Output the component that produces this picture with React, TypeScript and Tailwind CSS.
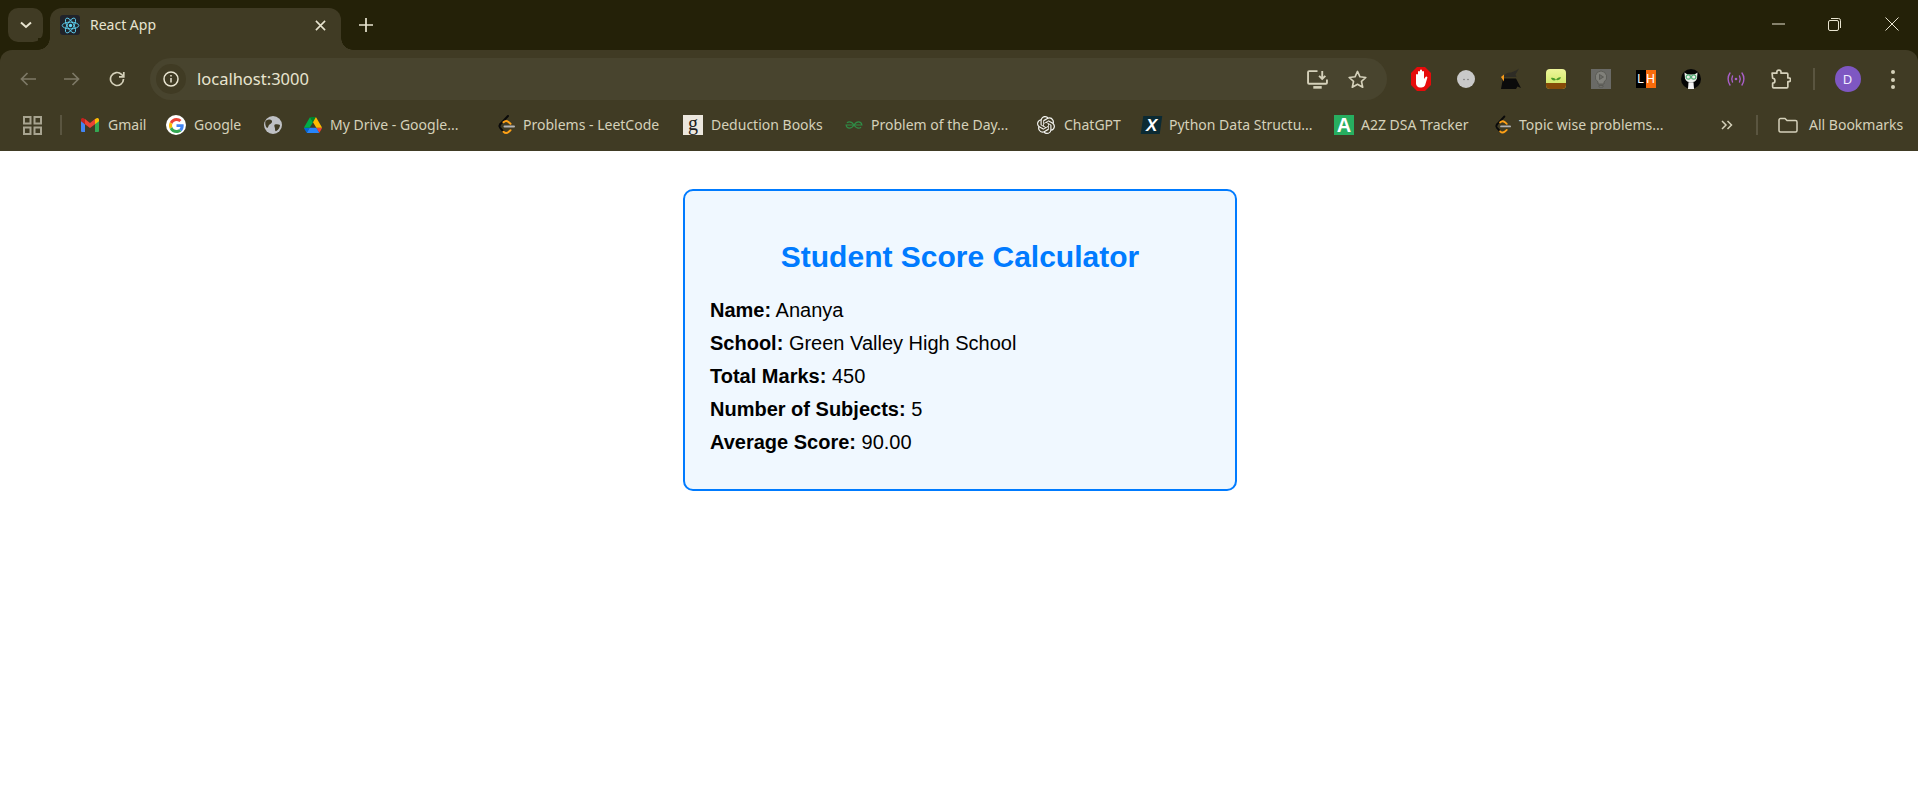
import React from "react";
import { SiOpenai } from "react-icons/si";

const ReactIcon = () => (
  <div className="w-[20px] h-[20px] rounded-[3px] bg-[#20232a] flex items-center justify-center">
    <svg viewBox="-12 -12 24 24" width="19" height="19" fill="none" stroke="#61dafb" strokeWidth="1.1">
      <ellipse rx="10.5" ry="4.2" />
      <ellipse rx="10.5" ry="4.2" transform="rotate(60)" />
      <ellipse rx="10.5" ry="4.2" transform="rotate(120)" />
      <circle r="2.1" fill="#61dafb" stroke="none" />
    </svg>
  </div>
);

const Gmail = () => (
  <svg viewBox="0 0 18 14" width="18" height="14">
    <path d="M0 2.2V13a1 1 0 0 0 1 1h3V6.2z" fill="#4285f4" />
    <path d="M14 14h3a1 1 0 0 0 1-1V2.2l-4 4z" fill="#34a853" />
    <path d="M14 1v5.2l4-3V1.6C18 .2 16.4-.5 15.3.4z" fill="#fbbc04" />
    <path d="M4 6.2V1l5 3.9L14 1v5.2l-5 3.8z" fill="#ea4335" />
    <path d="M0 1.6v1.6l4 3V1L2.7.4C1.6-.5 0 .2 0 1.6z" fill="#c5221f" />
  </svg>
);

const Google = () => (
  <div className="w-[20px] h-[20px] rounded-full bg-white flex items-center justify-center">
    <svg viewBox="0 0 48 48" width="15" height="15">
      <path fill="#EA4335" d="M24 9.5c3.5 0 6.7 1.2 9.2 3.6l6.9-6.9C35.9 2.4 30.5 0 24 0 14.6 0 6.5 5.4 2.6 13.2l8 6.2C12.5 13.7 17.8 9.5 24 9.5z" />
      <path fill="#4285F4" d="M47 24.5c0-1.6-.1-3.100-.4-4.500H24v9h12.900c-.6 3-2.200 5.500-4.800 7.200l7.700 6c4.500-4.200 7.200-10.300 7.200-17.700z" />
      <path fill="#FBBC05" d="M10.600 28.600A14.500 14.500 0 0 1 10.600 19.400l-8-6.200a24 24 0 0 0 0 21.600z" />
      <path fill="#34A853" d="M24 48c6.500 0 11.900-2.100 15.900-5.800l-7.700-6c-2.200 1.500-5 2.300-8.200 2.300-6.200 0-11.500-4.200-13.400-9.900l-8 6.200C6.500 42.600 14.600 48 24 48z" />
    </svg>
  </div>
);

const Globe = () => (
  <svg viewBox="0 0 18 18" width="18" height="18">
    <circle cx="9" cy="9" r="9" fill="#bfc1c5" />
    <path d="M1.500 5c2.500-1.500 5-1.800 6-.8s.5 2.300-.5 3.300-2 1-2.500 2.500S3.500 12.500 2.500 11.500.8 7 1.500 5z" fill="#403b24" />
    <path d="M11 8.500c1.500-.5 3.800-.3 5 .5 0 2.500-1.500 5-4 6.300-1 0-1-1.800-1-2.800s-1.500-3.500 0-4z" fill="#403b24" />
  </svg>
);

const Drive = () => (
  <svg viewBox="0 0 87.300 78" width="18" height="16">
    <path d="M6.600 66.850l3.850 6.650c.8 1.400 1.950 2.500 3.300 3.300L27.500 53H0c0 1.550.4 3.100 1.200 4.500z" fill="#0066da" />
    <path d="M43.650 25L29.900 1.200c-1.350.8-2.500 1.900-3.300 3.300L1.200 48.500A9 9 0 0 0 0 53h27.500z" fill="#00ac47" />
    <path d="M73.550 76.800c1.350-.8 2.500-1.900 3.300-3.300l1.600-2.750 7.650-13.250c.8-1.400 1.200-2.950 1.200-4.500H59.800l5.850 11.500z" fill="#ea4335" />
    <path d="M43.650 25L57.400 1.200C56.050.4 54.500 0 52.900 0H34.400c-1.600 0-3.150.45-4.500 1.200z" fill="#00832d" />
    <path d="M59.800 53H27.500L13.750 76.800c1.350.8 2.900 1.200 4.500 1.200h50.800c1.600 0 3.150-.45 4.500-1.200z" fill="#2684fc" />
    <path d="M73.400 26.500L60.700 4.500c-.8-1.400-1.950-2.500-3.300-3.300L43.650 25 59.800 53h27.450c0-1.550-.4-3.100-1.200-4.500z" fill="#ffba00" />
  </svg>
);

const LeetCode = () => (
  <svg viewBox="0 0 18 20" width="18" height="20" fill="none" strokeLinecap="round" strokeLinejoin="round">
    <path d="M11 1 3 9.500" stroke="#0a0a0a" strokeWidth="2" />
    <path d="M3 9.500c-1 1.200-1 2 0 3.200l3.500 4" stroke="#0a0a0a" strokeWidth="2" />
    <path d="M6.500 16.700c1.500 1.500 3.500 1.500 5 .3l2-1.800" stroke="#ffa116" strokeWidth="2" />
    <path d="M6.500 7.300c1.500-1.500 3.500-1.500 5-.3l2 1.800" stroke="#ffa116" strokeWidth="2" />
    <path d="M7.500 11.500H17" stroke="#b3b3b3" strokeWidth="2" />
  </svg>
);

const Deduction = () => (
  <div className="w-[20px] h-[20px] bg-[#ece7de] flex items-center justify-center font-['Liberation_Serif',serif] text-[#222] text-[20px] leading-none pb-[5px]">
    g
  </div>
);

const Gfg = () => (
  <svg viewBox="0 0 20 10" width="18" height="10" fill="none" stroke="#2f8d46" strokeWidth="1.300">
    <path d="M10 5H18.800C18.500 2.800 16.900 1.500 15 1.500c-2.200 0-3.800 1.600-5 3.500C8.800 6.900 7.200 8.500 5 8.500 3.100 8.500 1.500 7.200 1.200 5H10" />
    <path d="M10 5C8.800 3.100 7.200 1.500 5 1.500c-1.100 0-2.100.4-2.800 1.200M10 5c1.200 1.900 2.800 3.500 5 3.500 1.100 0 2.100-.4 2.800-1.200" />
  </svg>
);

const XIcon = () => (
  <div className="w-[19px] h-[18px] bg-[#0b2a33] -skew-x-[8deg] flex items-center justify-center">
    <span className="skew-x-[8deg] text-white italic font-bold text-[17px] leading-none font-['Liberation_Sans',sans-serif]">X</span>
  </div>
);

const AIcon = () => (
  <div className="w-[20px] h-[20px] bg-[#27ae60] flex items-center justify-center text-white font-bold text-[20px] leading-none font-['Liberation_Sans',sans-serif]">
    A
  </div>
);

const Folder = () => (
  <svg viewBox="0 0 20 16" width="20" height="16" fill="none" stroke="#d5d1ba" strokeWidth="1.500">
    <path d="M1 3a1.500 1.500 0 0 1 1.500-1.500H7L9 3.500h8.500A1.500 1.500 0 0 1 19 5v8.500a1.500 1.500 0 0 1-1.500 1.500h-15A1.500 1.500 0 0 1 1 13.500z" />
  </svg>
);

const AdBlock = () => (
  <svg viewBox="0 0 20 24" width="20" height="24">
    <path d="M6 0h8l6 6v12l-6 6H6l-6-6V6z" fill="#e60b0b" />
    <path d="M5 12V8a1 1 0 0 1 2 0V5a1 1 0 0 1 2 0V3.500a1 1 0 0 1 2 0V5a1 1 0 0 1 2 0v7l1.500-2a1 1 0 0 1 1.700 1.200L14 18.500c-.8 1.200-2 2-3.500 2H9C6.800 20.500 5 18.800 5 16.500z" fill="#fff" />
  </svg>
);

const Moon = () => (
  <svg viewBox="0 0 18 18" width="18" height="18">
    <circle cx="9" cy="9" r="9" fill="#c9c9c9" />
    <circle cx="7" cy="9.500" r=".8" fill="#777" />
    <circle cx="11" cy="9.500" r=".8" fill="#777" />
  </svg>
);

const Kettle = () => (
  <svg viewBox="0 0 22 22" width="22" height="22">
    <path d="M4 9c0-2.500 3-4.500 7-4.500l5-2 3-2-2 3.500-1.500 2.500 1 2.500H4z" fill="#2e2c25" />
    <path d="M3 10.500h13l5 9.500-3.500-1.500-1.500 2.500H1z" fill="#0b0b0b" />
    <path d="M1 9l3-2.500v7z" fill="#f59a1b" />
  </svg>
);

const Citrus = () => (
  <div className="w-[20px] h-[20px] rounded-[4px] overflow-hidden flex flex-col bg-[linear-gradient(#eef59a,#c9e55c)]">
    <div className="h-[14px] flex items-end justify-center">
      <svg viewBox="0 0 12 7" width="12" height="7">
        <path d="M6 7V4C5 2 3 1.500 1 2c.5 2 2.500 3 5 2 1-2 3-3 5-2.500C10.500 3.500 8 4.500 6 4z" fill="#4d9a2a" />
      </svg>
    </div>
    <div className="flex-1 bg-[#874a08]" />
  </div>
);

const Bulb = () => (
  <div className="w-[20px] h-[20px] bg-[#6a6a66] flex items-center justify-center">
    <svg viewBox="0 0 14 18" width="14" height="18" fill="#80807a" stroke="#54544e" strokeWidth=".8">
      <path d="M7 1a6 6 0 0 0-3 11v2h6v-2A6 6 0 0 0 7 1z" />
      <path d="M5 15.500h4V17H5z" />
      <path d="M5.500 4.500v5l4-2.500z" fill="#6a6a66" />
    </svg>
  </div>
);

const LH = () => (
  <div className="flex w-[20px] h-[18px] text-white text-[12px] leading-[18px] text-center font-['Liberation_Sans',sans-serif]">
    <span className="w-[10px] bg-black">L</span>
    <span className="w-[10px] bg-[#f96b0b]">H</span>
  </div>
);

const Cat = () => (
  <svg viewBox="0 0 20 20" width="20" height="20">
    <circle cx="10" cy="10" r="10" fill="#050505" />
    <path d="M3.500 3.500 6.500 5.500h7l3-2-.5 6c-1 2.800-3 3.800-6 3.800s-5-1-6-3.800z" fill="#eef0ec" />
    <circle cx="7.300" cy="8" r="2.200" fill="none" stroke="#58b07a" strokeWidth="1.200" />
    <circle cx="12.700" cy="8" r="2.200" fill="none" stroke="#58b07a" strokeWidth="1.200" />
    <path d="M7.500 13.300h5l.5 6.700H7z" fill="#f4f4f4" />
  </svg>
);

const Podcast = () => (
  <svg viewBox="0 0 18 14" width="18" height="14" fill="none" stroke="#a95fc9" strokeWidth="1.400" strokeLinecap="round">
    <path d="M3 1C.5 4.500.5 9.500 3 13" />
    <path d="M15 1c2.500 3.500 2.500 8.500 0 12" />
    <path d="M5.500 4c-1 2-1 4 0 6" />
    <path d="M12.500 4c1 2 1 4 0 6" />
    <circle cx="9" cy="7" r="1.300" fill="#a95fc9" stroke="none" />
  </svg>
);

const Puzzle = () => (
  <svg viewBox="0 0 20 20" width="21" height="21" fill="none" stroke="#d5d1ba" strokeWidth="1.600" strokeLinejoin="round">
    <path d="M2 4h4.500V3a2 2 0 0 1 4 0v1H16a1 1 0 0 1 1 1v3.500h.8a1.800 1.800 0 0 1 0 3.600H17V17a1 1 0 0 1-1 1H3.500a1 1 0 0 1-1-1v-3.500c1.500 0 2.200-1 2.200-2.300S4 8.800 2.500 8.800z" />
  </svg>
);

type BM = { ml: string; w: string; icon: React.ReactNode; label?: string; iw: string; gap: string };

const Bookmark = ({ ml, w, icon, label, iw, gap }: BM) => (
  <div className={`flex items-center shrink-0 ${ml}`}>
    <div className={`flex items-center justify-center shrink-0 ${iw}`}>{icon}</div>
    {label && <span className={`whitespace-nowrap shrink-0 text-[14px] text-[#d5d1ba] leading-none ${gap} ${w}`}>{label}</span>}
  </div>
);

const Ext = ({ children }: { children: React.ReactNode }) => (
  <div className="w-[45px] h-[42px] flex items-center justify-center shrink-0">{children}</div>
);

const Row = ({ label, value }: { label: string; value: string }) => (
  <p className="mb-[10px] text-[20px] leading-[23px] text-black">
    <strong className="font-bold">{label}</strong> {value}
  </p>
);

export default function App() {
  return (
    <div className="min-h-[800px] bg-white flex flex-col">
      <header className="bg-[#242108] font-['Noto_Sans',sans-serif]">
        <div className="h-[50px] flex items-start pt-[8px] pl-[8px]">
          <div className="w-[35px] h-[34px] rounded-[10px] bg-[#403b24] flex items-center justify-center">
            <svg viewBox="0 0 12 8" width="12" height="8" fill="none" stroke="#e8e4d0" strokeWidth="2">
              <path d="M1 1.500 6 6l5-4.500" />
            </svg>
          </div>
          <div className="relative ml-[7px] w-[291px] h-[42px] rounded-t-[12px] bg-[#403b24] flex items-center pl-[10px] pr-[15px] pb-[8px]">
            <div className="absolute left-[-12px] bottom-0 w-[12px] h-[12px] bg-[radial-gradient(circle_at_0_0,#242108_11.5px,#403b24_12px)]" />
            <div className="absolute right-[-12px] bottom-0 w-[12px] h-[12px] bg-[radial-gradient(circle_at_100%_0,#242108_11.5px,#403b24_12px)]" />
            <ReactIcon />
            <span className="ml-[10px] text-[14px] text-[#e8e4d0] leading-none">React App</span>
            <svg className="ml-auto" viewBox="0 0 12 12" width="11" height="11" fill="none" stroke="#e8e4d0" strokeWidth="1.700">
              <path d="M1 1l10 10M11 1 1 11" />
            </svg>
          </div>
          <svg className="ml-[18px] mt-[10px]" viewBox="0 0 14 14" width="14" height="14" fill="none" stroke="#e8e4d0" strokeWidth="1.700">
            <path d="M7 0v14M0 7h14" />
          </svg>
          <div className="ml-auto flex items-center h-[32px] pr-[19px]">
            <svg viewBox="0 0 13 2" width="13" height="2"><path d="M0 1h13" stroke="#e8e4d0" /></svg>
            <svg className="ml-[43px]" viewBox="0 0 13 13" width="13" height="13" fill="none" stroke="#e8e4d0">
              <rect x=".5" y="2.500" width="10" height="10" rx="1.500" />
              <path d="M3 .5h7.500a2 2 0 0 1 2 2V10" />
            </svg>
            <svg className="ml-[44px]" viewBox="0 0 14 14" width="14" height="14" fill="none" stroke="#e8e4d0">
              <path d="M.5.5l13 13M13.500.5l-13 13" />
            </svg>
          </div>
        </div>

        <div className="bg-[#403b24] rounded-t-[12px] pb-[9px]">
          <div className="h-[58px] pt-[8px] flex items-start pl-[6px]">
            <div className="w-[44px] h-[42px] flex items-center justify-center">
              <svg viewBox="0 0 16 14" width="16" height="14" fill="none" stroke="#7d7966" strokeWidth="1.700"><path d="M16 7H1.500M7.500 1l-6 6 6 6" /></svg>
            </div>
            <div className="w-[44px] h-[42px] flex items-center justify-center">
              <svg viewBox="0 0 16 14" width="16" height="14" fill="none" stroke="#7d7966" strokeWidth="1.700"><path d="M0 7h14.500M8.500 1l6 6-6 6" /></svg>
            </div>
            <div className="w-[45px] h-[42px] flex items-center justify-center">
              <svg viewBox="0 0 16 16" width="16" height="16" fill="none" stroke="#d5d1ba" strokeWidth="1.700">
                <path d="M14.500 8A6.500 6.500 0 1 1 12.500 3.300L14.500 5.500" />
                <path d="M14.800 1v4.800H10" />
              </svg>
            </div>
            <div className="ml-[11px] w-[1237px] h-[42px] rounded-full bg-[#48442e] flex items-center pl-[6px] pr-[10px] shrink-0">
              <div className="w-[30px] h-[30px] rounded-full bg-[#403b24] flex items-center justify-center">
                <svg viewBox="0 0 16 16" width="16" height="16" fill="none" stroke="#e8e4d0" strokeWidth="1.500">
                  <circle cx="8" cy="8" r="7" />
                  <path d="M8 7v4.500" />
                  <path d="M8 4v1.500" />
                </svg>
              </div>
              <span className="ml-[11px] text-[16.500px] text-[#e8e4d0] leading-none">localhost:3000</span>
              <div className="ml-auto w-[40px] flex justify-center">
                <svg viewBox="0 0 20 18" width="21" height="19" fill="none" stroke="#d5d1ba" strokeWidth="1.800">
                  <path d="M10 1H2a1 1 0 0 0-1 1v10a1 1 0 0 0 1 1h16a1 1 0 0 0 1-1V9" />
                  <path d="M6 16.500h8" strokeWidth="2.500" />
                  <path d="M14.500 1v7M11.500 5.500l3 3 3-3" />
                </svg>
              </div>
              <div className="w-[40px] flex justify-center">
                <svg viewBox="0 0 20 19" width="19" height="18" fill="none" stroke="#d5d1ba" strokeWidth="1.700" strokeLinejoin="round">
                  <path d="M10 1.500l2.600 5.700 6.200.7-4.600 4.200 1.300 6.100L10 15.100 4.500 18.200l1.300-6.100L1.200 7.900l6.200-.7z" />
                </svg>
              </div>
            </div>
            <div className="ml-[11px] flex items-center shrink-0">
              <Ext><AdBlock /></Ext>
              <Ext><Moon /></Ext>
              <Ext><Kettle /></Ext>
              <Ext><Citrus /></Ext>
              <Ext><Bulb /></Ext>
              <Ext><LH /></Ext>
              <Ext><Cat /></Ext>
              <Ext><Podcast /></Ext>
              <Ext><Puzzle /></Ext>
            </div>
            <div className="ml-[10px] mt-[10px] w-[1.500px] h-[22px] bg-[#5a5540] shrink-0" />
            <div className="ml-[20px] mt-[8px] w-[26px] h-[26px] rounded-full bg-[#7e57c2] text-[#f0ecff] text-[13px] leading-[26px] text-center shrink-0">D</div>
            <div className="ml-[30px] mt-[12px] flex flex-col gap-[3.500px] shrink-0">
              <div className="w-[4px] h-[4px] rounded-full bg-[#d5d1ba]" />
              <div className="w-[4px] h-[4px] rounded-full bg-[#d5d1ba]" />
              <div className="w-[4px] h-[4px] rounded-full bg-[#d5d1ba]" />
            </div>
          </div>

          <div className="h-[34px] flex items-center pl-[23px]">
            <svg className="shrink-0" viewBox="0 0 19 19" width="19" height="19" fill="none" stroke="#a8a490" strokeWidth="2">
              <rect x="1" y="1" width="6.500" height="6.500" />
              <rect x="11.500" y="1" width="6.500" height="6.500" />
              <rect x="1" y="11.500" width="6.500" height="6.500" />
              <rect x="11.500" y="11.500" width="6.500" height="6.500" />
            </svg>
            <div className="ml-[18px] w-[2px] h-[20px] bg-[#5a5540] shrink-0" />
            <Bookmark ml="ml-[19px]" iw="w-[18px]" gap="ml-[9px]" w="w-[37px]" icon={<Gmail />} label="Gmail" />
            <Bookmark ml="ml-[21px]" iw="w-[20px]" gap="ml-[8px]" w="w-[48px]" icon={<Google />} label="Google" />
            <Bookmark ml="ml-[22px]" iw="w-[18px]" gap="" w="" icon={<Globe />} />
            <Bookmark ml="ml-[22px]" iw="w-[18px]" gap="ml-[8px]" w="w-[133px]" icon={<Drive />} label="My Drive - Google..." />
            <Bookmark ml="ml-[34px]" iw="w-[18px]" gap="ml-[8px]" w="w-[138px]" icon={<LeetCode />} label="Problems - LeetCode" />
            <Bookmark ml="ml-[22px]" iw="w-[20px]" gap="ml-[8px]" w="w-[111px]" icon={<Deduction />} label="Deduction Books" />
            <Bookmark ml="ml-[23px]" iw="w-[18px]" gap="ml-[8px]" w="w-[139px]" icon={<Gfg />} label="Problem of the Day..." />
            <Bookmark ml="ml-[27px]" iw="w-[18px]" gap="ml-[9px]" w="w-[57px]" icon={<SiOpenai className="text-[#f4f4f0] text-[18px]" />} label="ChatGPT" />
            <Bookmark ml="ml-[21px]" iw="w-[19px]" gap="ml-[8px]" w="w-[143px]" icon={<XIcon />} label="Python Data Structu..." />
            <Bookmark ml="ml-[22px]" iw="w-[20px]" gap="ml-[7px]" w="w-[110px]" icon={<AIcon />} label="A2Z DSA Tracker" />
            <Bookmark ml="ml-[23px]" iw="w-[17px]" gap="ml-[8px]" w="w-[144px]" icon={<LeetCode />} label="Topic wise problems..." />
            <svg className="ml-[58px] shrink-0" viewBox="0 0 12 10" width="12" height="10" fill="none" stroke="#d5d1ba" strokeWidth="1.500">
              <path d="M1 1l4 4-4 4M6.500 1l4 4-4 4" />
            </svg>
            <div className="ml-[23px] w-[2px] h-[20px] bg-[#5a5540] shrink-0" />
            <Bookmark ml="ml-[20px]" iw="w-[20px]" gap="ml-[11px]" w="w-[94px]" icon={<Folder />} label="All Bookmarks" />
          </div>
        </div>
      </header>

      <main className="flex justify-center items-start pt-[38px] pl-[2px] font-['Liberation_Sans',sans-serif]">
        <div className="w-[554px] border-2 border-[#007bff] rounded-[10px] bg-[#f0f8ff] p-[25px]">
          <h2 className="mt-[24px] mb-[25px] text-[30px] leading-[34px] font-bold text-center text-[#007bff]">Student Score Calculator</h2>
          <Row label="Name:" value="Ananya" />
          <Row label="School:" value="Green Valley High School" />
          <Row label="Total Marks:" value="450" />
          <Row label="Number of Subjects:" value="5" />
          <Row label="Average Score:" value="90.00" />
        </div>
      </main>
    </div>
  );
}
